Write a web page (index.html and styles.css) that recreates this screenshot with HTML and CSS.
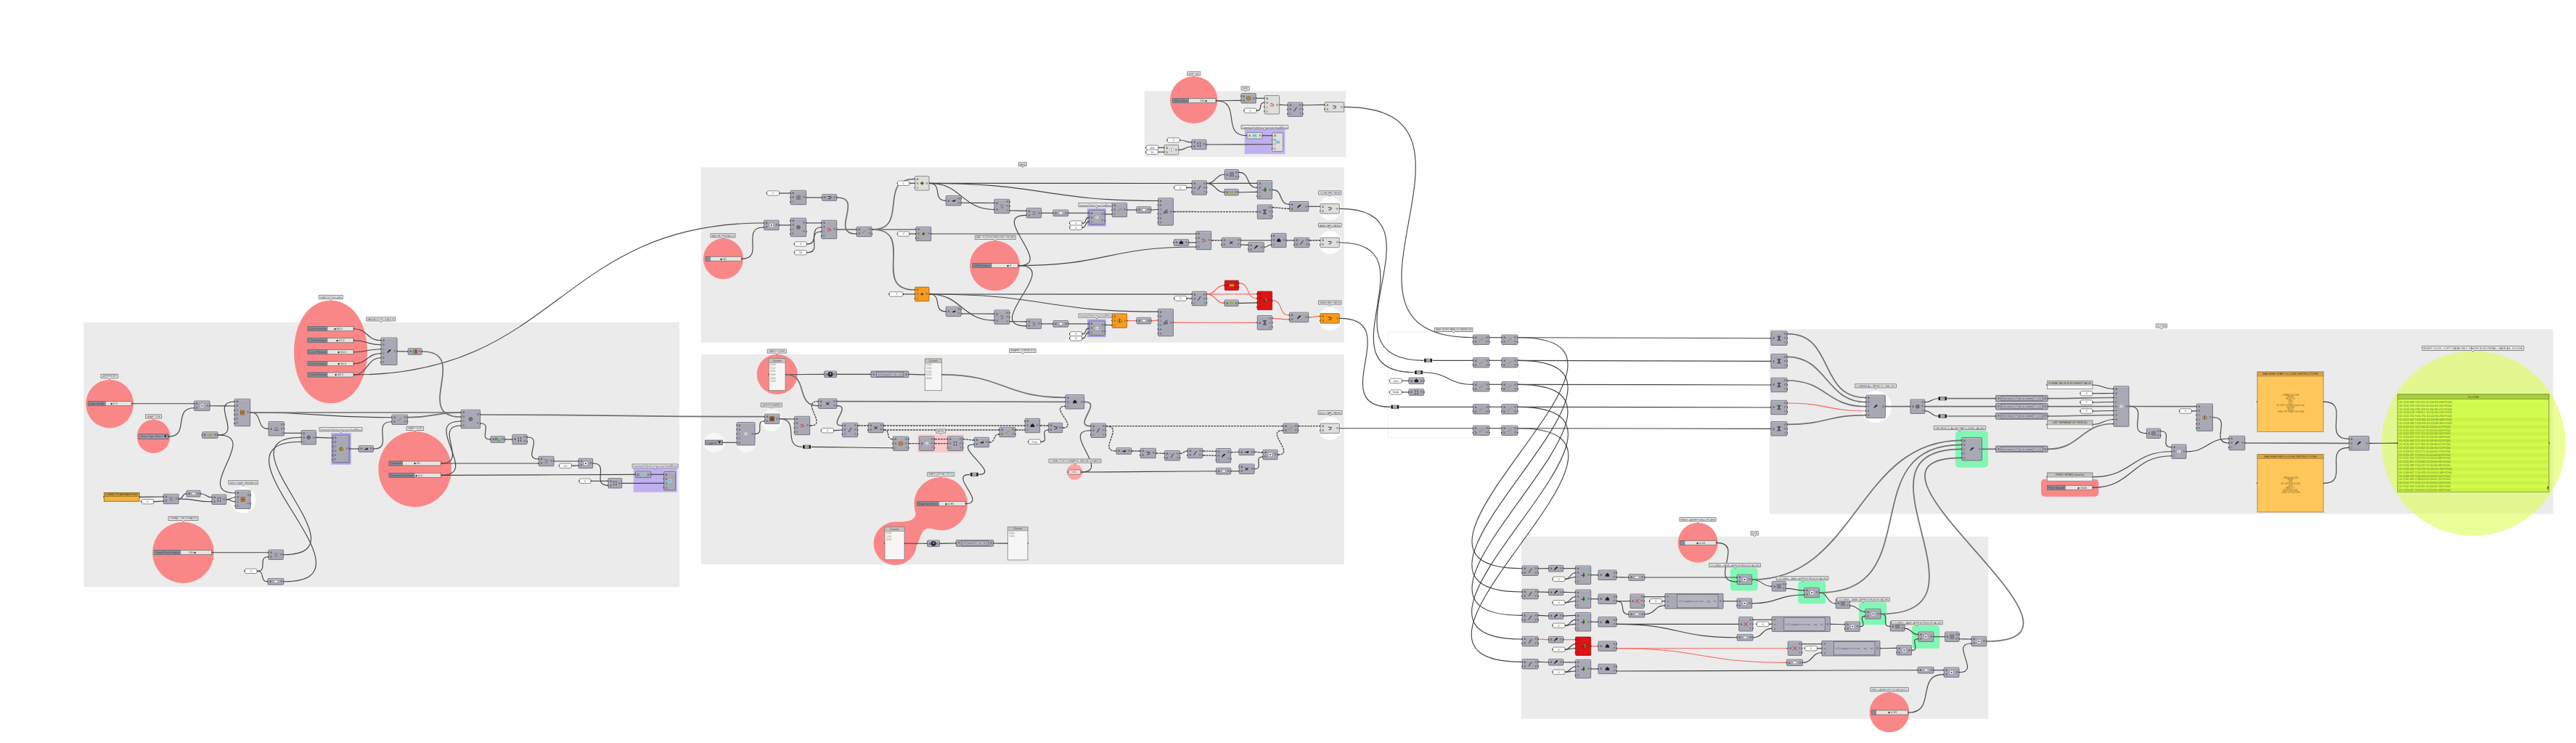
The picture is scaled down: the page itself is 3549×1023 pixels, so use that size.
FILE: index.html
```html
<!DOCTYPE html>
<html lang="en">
<head>
  <meta charset="UTF-8">
  <title>Definition canvas</title>
  <link rel="stylesheet" href="styles.css">
</head>
<body>
  <svg class="canvas" width="3549" height="1023" viewBox="0 0 3549 1023">
    <g id="groups"></g>
    <g id="wires"></g>
    <g id="nodes"></g>
    <g id="tags"></g>
  </svg>
  <script src="graph.js"></script>
</body>
</html>
```

FILE: styles.css
```css
body {
  margin: 0;
  background: #fff;
  overflow: hidden;
}
.canvas {
  display: block;
  font-family: "Liberation Sans", Arial, sans-serif;
}

/* groups */
.group { fill: #ebebeb; }
.outline { fill: none; stroke: #f0f0f0; stroke-width: 1; }
.red { fill: #fa8787; }
.pink { fill: #fbc8ca; }
.pale { fill: #ffa3a6; }
.purple { fill: #c0b0f0; }
.violet { fill: #aaa2f0; }
.green { fill: #80f7b4; }
.halo { fill: #fff; fill-opacity: .85; }
.soft { fill: #f7f7f5; }
.lime { fill: #dcff50; fill-opacity: .58; }

/* wires */
.wire { fill: none; stroke: #444; stroke-width: 1.15; }
.thick { stroke-width: 1.7; stroke: #707070; }
.dash { stroke-width: 1.3; stroke-dasharray: 3 1; }
.error { stroke: #f4665a; }

/* components */
.node { fill: #a9a9b5; stroke: #5f5f69; stroke-width: .8; }
.node.light { fill: #dededb; stroke: #747472; }
.node.warn { fill: #fb9a1c; stroke: #8c5a18; }
.node.fail { fill: #e11316; stroke: #8d1012; }
.edge { fill: #c8c8d1; fill-opacity: .7; }
.port { fill: #262626; }
.letter { font-size: 3.8px; fill: #44444f; text-anchor: middle; }
.letter.fail { fill: #7a0d0d; }
.letter.warn { fill: #7d4d0c; }
.value { fill: #fff; stroke: #606060; stroke-width: .7; }
.value.pinkish { fill: #ffd9d9; }
.relay { fill: #1d1d1d; }
.relay-mid { fill: #a5a5a5; }
.formula { fill: #b5b5c2; stroke: #62626e; stroke-width: .7; }
.formula-text { font-size: 4px; fill: #555566; font-family: "Liberation Mono", monospace; }

/* sliders and panels */
.slider { fill: #e6e5e1; stroke: #666; stroke-width: .7; }
.slider-name { fill: #8b8e98; stroke: #565a64; stroke-width: .5; }
.slider-text { font-size: 3.4px; fill: #3e414a; }
.knob-text { font-size: 4px; fill: #333; }
.list { fill: #a0a2ac; stroke: #4c4c56; stroke-width: .7; }
.panel { fill: #f6f6f6; stroke: #808080; stroke-width: .8; }
.panel-head { fill: #c4c4c0; stroke: #808080; stroke-width: .6; }
.panel-text { font-size: 3.2px; fill: #555; }
.panel.orange { fill: #ffc75a; stroke: #9b7c40; }
.panel-head.orange { fill: #d9a345; stroke: #9b7c40; }
.panel.amber { fill: #f0b540; stroke: #85641f; }
.panel-head.amber { fill: #d19a35; stroke: #85641f; }
.panel.acid { fill: #d2fb50; stroke: #6a8226; }
.panel-head.acid { fill: #a9d03d; stroke: #6a8226; }
.stripe { fill: #caf243; }
.orange-text { font-size: 3.2px; fill: #80601f; text-anchor: middle; }
.acid-text { font-size: 3.6px; fill: #5c7818; }
.head-text { font-size: 3.8px; fill: #3e3c26; text-anchor: middle; }
.grip { fill: #5b6f24; }

/* tags */
.tag { fill: #f0f0f0; stroke: #666a6a; stroke-width: .8; }
.tag-text { font-size: 4.4px; fill: #424545; }

/* icons */
.i-dark { fill: #222228; }
.i-line { fill: none; stroke: #2e2e36; stroke-width: .9; }
.i-gray { fill: none; stroke: #5f5f6a; stroke-width: .7; }
.i-white { fill: #fff; stroke: #777; stroke-width: .3; }
.i-orange { fill: #e2902c; stroke: #7c480c; stroke-width: .6; }
.i-yellow { fill: #cfa83a; stroke: #5f4d18; stroke-width: .5; }
.i-olive { fill: #a4ac2d; }
.i-green { fill: #49b83a; }
.i-red { fill: none; stroke: #c4303c; stroke-width: 1; }
.i-redfill { fill: #d32e2e; }
.i-cyan { fill: #8adbe4; }
```

FILE: graph.js
```js
const NS = 'http://www.w3.org/2000/svg';
const layer = id => document.getElementById(id);
const groups = layer('groups'), wireLayer = layer('wires'), nodes = layer('nodes'), tags = layer('tags');
const ports = {};
const STEP = 6;

function el(parent, name, cls, attrs, text) {
  const e = document.createElementNS(NS, name);
  if (cls) e.setAttribute('class', cls);
  for (const k in attrs) e.setAttribute(k, attrs[k]);
  if (text !== undefined) e.textContent = text;
  parent.appendChild(e);
  return e;
}
function rect(parent, cls, x, y, width, height, rx = 0) {
  return el(parent, 'rect', cls, { x, y, width, height, rx });
}
function fitText(parent, cls, x, y, width, text) {
  return el(parent, 'text', cls, { x, y, textLength: width, lengthAdjust: 'spacingAndGlyphs' }, text);
}
function ellipse(cls, x, y, w, h) {
  el(groups, 'ellipse', cls, { cx: x + w / 2, cy: y + h / 2, rx: w / 2, ry: h / 2 });
}
function box(cls, x, y, w, h, r) { rect(groups, cls, x, y, w, h, r); }
function dot(x, y) { el(nodes, 'circle', 'port', { cx: x, cy: y, r: 1.15 }); }

// port rows are spread over the height of the component
function rows(cy, count, max) {
  const gap = STEP * max / count;
  return Array.from({ length: count }, (_, i) => cy + (i - (count - 1) / 2) * gap);
}

const icons = {
  dot: [['rect', 'i-white', { x: -2.3, y: -2.3, width: 4.6, height: 4.6 }], ['circle', 'i-dark', { r: 1 }]],
  box: [['rect', 'i-orange', { x: -2.6, y: -3, width: 5.2, height: 6 }], ['path', 'i-line', { d: 'M-1-1.5V1.5M1-1.5V1.5' }]],
  grid: [['rect', 'i-orange', { x: -3, y: -3, width: 6, height: 6 }], ['path', 'i-line', { d: 'M-1-3V3M1-3V3M-3-1H3M-3 1H3' }]],
  hex: [['path', 'i-orange', { d: 'M0-3L2.8-1.4V1.6L0 3L-2.8 1.6V-1.4Z' }], ['circle', 'i-yellow', { r: 1.2 }]],
  yellow: [['path', 'i-yellow', { d: 'M-2.5-1L0-2.6L2.8-1V2.4H-2Z' }], ['path', 'i-line', { d: 'M0-2V2' }]],
  olive: [['path', 'i-olive', { d: 'M-3.2 0L0-2.6L3.2 0L0 2.6Z' }], ['path', 'i-line', { d: 'M-2 0H2M0-2V2' }]],
  plus: [['path', 'i-green', { d: 'M0-3H2.4V2H0Z' }], ['path', 'i-line', { d: 'M-3 .5H2M.5-3V3' }]],
  leaf: [['rect', 'i-olive', { x: -3, y: -1.5, width: 6, height: 3 }]],
  slash: [['path', 'i-gray', { d: 'M-2.5 2L2.5-2' }], ['path', 'i-olive', { d: 'M-2.2 2.2L-1.6 0L2.4-2.6L1.6 0Z', opacity: .6 }]],
  line: [['path', 'i-line', { d: 'M-2.4 2.4Q0 2 0 0T2.4-2.4' }]],
  merge: [['path', 'i-dark', { d: 'M-2.6 2.4L-1.8 0L1-2.6L2.8-1.8L1 .2L-.6 .6L-1 2Z' }]],
  tree: [['circle', 'i-dark', { r: 1.1 }], ['path', 'i-line', { d: 'M-2.2-2L0 0L2.6-1.6M0 0L2 2.4M0 0L-2.4 2' }]],
  blob: [['path', 'i-dark', { d: 'M0-3L2.4-.8L2.8 2H-2.8L-2.4-.8Z' }]],
  brush: [['path', 'i-dark', { d: 'M-3 0H-1L2.8-1.6L2.4 1.2H-1Z' }]],
  ring: [['circle', 'i-line', { r: 2.2 }], ['circle', 'i-dark', { r: .8 }]],
  fan: [['path', 'i-line', { d: 'M-3 2.5Q-2-2 2.5-2.8M-1.4 2.6Q-.6 0 2.6-.6M.4 2.6Q.6 1.5 2.6 1.2' }]],
  fork: [['path', 'i-gray', { d: 'M-2.4-2.4Q0-2 0 0T2.6 2.4M0 0L2.4-2M-2 2.2H0' }]],
  poly: [['path', 'i-gray', { d: 'M-2.6 2.2L0-2.4L2.6 2.2ZM-2.6 2.2H2.6' }]],
  knot: [['path', 'i-line', { d: 'M-2.4-2.6H2.4M-2.4 2.6H2.4M-1.6-2.6L1.6 2.6M1.6-2.6L-1.6 2.6' }]],
  four: [['path', 'i-gray', { d: 'M-2.4-2.6H-.4V-.6H-2.4ZM.6-2.6H2.6V-.6H.6ZM-2.4 .6H-.4V2.6H-2.4ZM.6 .6H2.6V2.6H.6Z' }]],
  bars: [['path', 'i-line', { d: 'M-1.6-3V-.6M1.6-3V-.6M-1.6 .6V3M1.6 .6V3' }]],
  red: [['path', 'i-red', { d: 'M-2.6-.6Q-1.4-3 .4-1.4T2.6 0L1 2.4M-2.4 2.4Q-1 .4 .4 1' }]],
  white: [['rect', 'i-white', { x: -2, y: -1.4, width: 4.4, height: 2.6 }]],
  eq: [['rect', 'i-white', { x: -2.2, y: -2.2, width: 4.4, height: 4.4 }], ['path', 'i-gray', { d: 'M-1-.6H1M-1 .8H1' }]],
  cross: [['path', 'i-red', { d: 'M-2.8-2.8L2.8 2.8M2.8-2.8L-2.8 2.8' }]],
  cyan: [['rect', 'i-cyan', { x: -3.2, y: -2.2, width: 6.4, height: 4.4 }], ['path', 'i-gray', { d: 'M-2 1L0-1L2 1' }]],
  teal: [['path', 'i-green', { d: 'M-2-2.6H0V0H3V2.6H-.6V.6H-2Z' }], ['path', 'i-line', { d: 'M-2.6-2.6V1' }]],
  flip: [['rect', 'i-green', { x: -3, y: -3, width: 3, height: 6 }], ['rect', 'i-redfill', { x: 0, y: -3, width: 3, height: 6 }]],
  hop: [['path', 'i-line', { d: 'M-2.4-1.6L2.2-1.2L1.4 1.4L-1.6 2' }]],
  ball: [['circle', 'i-dark', { r: 3.4 }], ['path', 'i-white', { d: 'M-.8-1.6H1V0H0V1.4' }]]
};
function icon(name, x, y) {
  const g = el(nodes, 'g', '', { transform: `translate(${x} ${y})` });
  for (const [shape, cls, attrs] of icons[name]) el(g, shape, cls, attrs);
}

function node(id, x, cy, w, nin, nout, ic, state = '', size) {
  const max = size || Math.max(nin, nout);
  const h = max === 1 ? 8.6 : max * STEP + 1.4;
  const ins = nin ? rows(cy, nin, max) : [], outs = nout ? rows(cy, nout, max) : [];
  ins.forEach(y => dot(x, y));
  outs.forEach(y => dot(x + w, y));
  rect(nodes, 'node ' + state, x, cy - h / 2, w, h, .8);
  if (!state) rect(nodes, 'edge', x + .5, cy - h / 2 + .4, w - 1, 1.1);
  ins.forEach((y, i) => el(nodes, 'text', 'letter ' + state, { x: x + 3.4, y: y + 1.4 }, 'ABCDEFGHI'[i]));
  outs.forEach((y, i) => el(nodes, 'text', 'letter ' + state, { x: x + w - 3, y: y + 1.4 }, 'RPTV'[i]));
  if (ic) icon(ic, x + w / 2, cy);
  ports[id] = { x, r: x + w, ins, outs };
}
function value(id, x, cy, w = 16.7, text = '0', cls = '') {
  dot(x, cy);
  dot(x + w, cy);
  rect(nodes, 'value ' + cls, x, cy - 3.2, w, 6.4, 2);
  el(nodes, 'text', 'letter', { x: x + w / 2, y: cy + 1.3 }, text);
  ports[id] = { x, r: x + w, ins: [cy], outs: [cy] };
}
function slider(id, x, cy, w, split, knob, num, name) {
  dot(x + w, cy);
  rect(nodes, 'slider', x, cy - 3, w, 6);
  rect(nodes, 'slider-name', x, cy - 3, split, 6);
  if (split > 10) fitText(nodes, 'slider-text', x + 1.5, cy + 1.2, split - 3, name);
  el(nodes, 'text', 'knob-text', { x: knob, y: cy + 1.4 }, num.includes('◆') ? num : '◆ ' + num);
  ports[id] = { x, r: x + w, ins: [cy], outs: [cy] };
}
function list(id, x, cy, w, name) {
  dot(x + w, cy);
  rect(nodes, 'list', x, cy - 3.2, w, 6.4);
  fitText(nodes, 'slider-text', x + 2, cy + 1.2, w - 10, name);
  el(nodes, 'path', 'i-dark', { d: `M${x + w - 6} ${cy - 1.8}h4l-2 3.6z` });
  ports[id] = { x, r: x + w, ins: [cy], outs: [cy] };
}
function relay(id, x, cy, w = 11.2) {
  rect(nodes, 'relay', x, cy - 2.5, w, 5, 1);
  rect(nodes, 'relay-mid', x + 2.6, cy - 2.3, w - 5.2, 4.6);
  ports[id] = { x, r: x + w, ins: [cy], outs: [cy] };
}
function formula(id, x, cy, w, nin, text) {
  const h = nin === 1 ? 8.6 : nin * STEP + 2.6, pad = nin === 1 ? 7.5 : 16.5;
  const ins = rows(cy, nin, nin);
  ins.forEach(y => dot(x, y));
  dot(x + w, cy);
  rect(nodes, 'node', x, cy - h / 2, w, h, .8);
  rect(nodes, 'formula', x + pad, cy - h / 2 + 1.2, w - pad - 7, h - 2.4);
  fitText(nodes, 'formula-text', x + pad + 2, cy + 1.4, w - pad - 11, text);
  ins.forEach((y, i) => el(nodes, 'text', 'letter', { x: x + 4, y: y + 1.3 }, 'Fxy'[i]));
  el(nodes, 'text', 'letter', { x: x + w - 3.4, y: cy + 1.3 }, 'R');
  ports[id] = { x, r: x + w, ins, outs: [cy] };
}
function panel(id, x, y, w, h, head, title, cls = '', port = y + h / 2) {
  dot(x, port);
  dot(x + w, port);
  rect(nodes, 'panel ' + cls, x, y, w, h);
  rect(nodes, 'panel-head ' + cls, x, y, w, head);
  const max = w - 4;
  const t = el(nodes, 'text', 'head-text', { x: x + w / 2, y: y + head / 2 + 1.3 }, title);
  if (t.getComputedTextLength() > max) {
    t.setAttribute('textLength', max);
    t.setAttribute('lengthAdjust', 'spacingAndGlyphs');
  }
  ports[id] = { x, r: x + w, ins: [port], outs: [port] };
}
function checklist(id, x, y, w, h, count) {
  panel(id, x, y, w, h, 5.6, 'Curves');
  for (let i = 0; i < count; i++) {
    el(nodes, 'text', 'panel-text', { x: x + 2, y: y + 9.2 + i * 4.7 }, i + ' 0.' + i);
  }
}
function tag(x, y, w, text, h = 5.2, tip = x + w / 2) {
  el(tags, 'path', 'tag', { d: `M${x} ${y}h${w}v${h}H${tip + 1.4}l-1.4 2l-1.4-2H${x}z` });
  fitText(tags, 'tag-text', x + 1.5, y + h / 2 + 1.5, w - 3, text);
}
function wires(cls, list) {
  for (const item of list.trim().split(/\s+/)) {
    const [a, b] = item.split('>');
    const [from, o = 0] = a.split('.'), [to, i = 0] = b.split('.');
    const x1 = ports[from].r + .8, y1 = ports[from].outs[o];
    const x2 = ports[to].x - .8, y2 = ports[to].ins[i];
    const k = Math.max(Math.abs(x2 - x1) * .5, Math.abs(y2 - y1) * .74);
    el(wireLayer, 'path', 'wire ' + cls, { d: `M${x1} ${y1}C${x1 + k} ${y1} ${x2 - k} ${y2} ${x2} ${y2}` });
  }
}

// --- groups -------------------------------------------------------------
box('group', 115.3, 443.7, 820.7, 364.3);
box('group', 966, 230.3, 885.7, 241.4);
box('group', 966, 488, 885.7, 289);
box('group', 1576.7, 125.3, 277.3, 90.7);
box('group', 2096, 738.7, 643.3, 251);
box('group', 2438, 453.3, 1079.5, 254.2);
box('outline', 1912.3, 457.3, 180.3, 145.3);

// --- base curves --------------------------------------------------------
ellipse('red', 118.3, 522.7, 65.7, 66.7);
ellipse('red', 188.7, 577.7, 45.7, 46.3);
el(groups, 'path', 'red', { d: 'M405 484.5C405 446 424 413.7 455.5 413.7S506 446 506 484.5S487 555.3 455.5 555.3S405 523 405 484.5Z' });
ellipse('red', 210, 718.7, 84.7, 84.3);
ellipse('red', 521.3, 594, 100.7, 104);
ellipse('halo', 318, 670.5, 34, 36);
box('violet', 456.3, 596.3, 27.3, 43.3);
box('purple', 872.7, 645, 60, 32.7);
tag(139, 515.3, 23.5, 'LAYER HEIGHT');
tag(200.5, 570.8, 22, 'SEAM TYPE');
tag(439.3, 406.5, 33, 'PLANE POSITION SLIDERS');
tag(504.7, 436.8, 40, 'MASS ADDITION / SCALE UP');
tag(440, 588.6, 59, 'Download Pufferfish plugin from Food4Rhino', 5.2, 470);
tag(314.7, 661.6, 40.7, 'SERVO PLANE ORIENTATION');
tag(232, 711.3, 41, 'OVERALL CIRCLE RADIUS');
tag(560, 587.3, 23.6, 'SHAPE COUNT');
tag(871, 639, 63, 'Download Pufferfish plugin from Food4Rhino');
slider('s1', 121.3, 555.7, 60, 24, 152, '0.5', 'Layer Height');
list('s2', 191.7, 601, 40, 'Seam Type Select');
[[452.7, 459.5, '46.0'], [468.7, 462.5, '47.0'], [484.7, 465, '50.0'], [500.7, 465, '50.0'], [516, 461, '46.5']]
  .forEach(([y, k, v], i) => slider('p' + i, 424, y, 63, 27, k, v, 'Curve Position'));
slider('s4', 212.7, 760.7, 79, 36, 260, '110 ◆', 'Overall Circle Radius');
slider('q1', 536, 638, 71.3, 18.7, 570, '20', 'Count');
slider('q2', 536, 654.3, 71.3, 35, 572, '0.5', 'Smoothing Strength');
node('a1', 267.7, 558.7, 21.3, 2, 1, 'dot');
node('a2', 323.3, 568, 21.3, 6, 1, 'box');
node('a3', 278.7, 599, 21.3, 1, 1, 'leaf');
node('a4', 370, 590.3, 21.3, 1, 3, 'poly');
node('a5', 415.3, 602.3, 20, 3, 1, 'ring');
node('a6', 458.7, 618, 22.3, 6, 1, 'yellow');
node('a7', 494.3, 618, 20, 1, 1, 'brush');
panel('pan', 143.3, 678.3, 48.7, 12, 5.2, 'CONNECT PLANE BASE POINT', 'amber');
value('v1', 195, 690.7);
node('a8', 225.3, 687, 20.7, 2, 1, 'fork');
node('a9', 257, 679.7, 19, 1, 1, 'white');
node('a10', 292, 687.7, 19.7, 2, 1, 'bars');
node('a11', 324.3, 687.7, 20.7, 4, 2, 'box');
node('b1', 370, 763.7, 20.3, 2, 1, 'fork');
value('v2', 337.3, 786.3);
node('b2', 369, 800.7, 21.7, 1, 1, 'white');
node('c1', 525, 483.7, 22, 6, 1, 'merge');
node('c2', 562.3, 484, 18.7, 1, 1, 'flip');
node('c3', 540, 577.7, 21.3, 2, 2, 'slash');
node('c4', 635.3, 577, 26.3, 4, 2, 'ring');
node('c5', 676, 605, 19.3, 1, 1, 'teal');
node('c6', 706, 605, 20, 1, 2, 'bars');
node('c7', 742.3, 635, 20.7, 2, 1, 'fork');
value('v3', 770.7, 641.3, 16.7, '0.5');
node('c8', 797.3, 638, 19.3, 2, 1, 'dot');
value('v4', 798.3, 662.3, 15.7);
node('c9', 838, 665.3, 18.7, 2, 1, 'bars');
node('c10', 875.7, 653.3, 21, 1, 1, 'cyan');
node('c11', 914.7, 662.3, 16, 4, 0, 'cyan');

// --- base infill --------------------------------------------------------
ellipse('red', 969, 328.3, 55, 56);
ellipse('red', 1336, 331.3, 69, 69);
tag(979, 321.7, 34, 'BASE PATTERN RADIUS');
tag(1343.3, 324.3, 56, 'BASE - FLOOR THICKNESS INFILL LINE (MM)');
tag(1403.3, 223.5, 11, 'BASE');
slider('r1', 972.3, 356.3, 49, 6, 992, '10', '');
slider('r2', 1340, 365.7, 62.3, 26, 1387, '2', 'Infill Thickness');
value('v5', 1056.7, 266, 17);
node('d1', 1089.3, 272, 21.3, 3, 1, 'four');
node('d2', 1132.7, 272, 20, 1, 1, 'hop');
node('d3', 1052.7, 310, 20.3, 2, 1, 'dot');
node('d4', 1089.3, 313, 21.3, 4, 2, 'ring');
node('d5', 1132, 316, 20.7, 4, 1, 'red');
value('v6', 1094.7, 336);
value('v7', 1094.7, 347.7, 16.7, '10');
node('d6', 1180.3, 319, 20.7, 2, 2, 'slash');
node('d7', 1260.7, 252.3, 19.3, 3, 1, 'olive', 'light');
value('v8', 1236.7, 252.3, 16.3, '1');
node('d10', 1262, 322, 20.7, 3, 1, 'olive');
value('v9', 1236.7, 322, 16.3, '0');
node('d11', 1260.7, 405, 19.3, 3, 1, 'olive', 'warn');
value('v10', 1225.3, 405, 18.7, '-1');
node('m0', 1617.3, 334, 20.3, 1, 1, 'blob');
node('m1', 1648, 331, 20.7, 4, 1, 'red');
node('m2', 1683.3, 334, 26, 2, 2, 'tree');
node('m3', 1720, 340.3, 21.3, 2, 1, 'merge');
node('m4', 1751.7, 331, 20.3, 3, 1, 'blob');
node('m5', 1783.3, 334, 20.3, 2, 2, 'line');
ellipse('halo', 1816.5, 318, 32, 32);
node('m6', 1819, 334, 26.3, 2, 1, 'hop', 'light');
tag(1816.5, 307.4, 31.5, 'BASE PART PATHS');

// the upper and the lower infill branch have the same layout
for (const [n, dy, bad] of [['u', 0, false], ['w', 152.6, true]]) {
  node(n + 1, 1303.3, 276.3 + dy, 20.7, 1, 2, 'brush');
  node(n + 2, 1370, 284 + dy, 20.7, 2, 3, 'fork');
  node(n + 3, 1642.3, 258.5 + dy, 20, 3, 3, 'line');
  value(n + 'v', 1618, 258.3 + dy);
  node(n + 4, 1687.3, 240.3 + dy, 19, 1, 2, bad ? 'leaf' : 'four', bad ? 'fail' : '');
  node(n + 5, 1687, 264.7 + dy, 19, 1, 1, 'leaf');
  node(n + 6, 1732.3, 261.3 + dy, 20.3, 4, 1, 'plus', bad ? 'fail' : '');
  node(n + 7, 1732.3, 291.7 + dy, 20.3, 1, 3, 'knot');
  node(n + 8, 1595.7, 291.5 + dy, 20.7, 6, 1, 'fan');
  node(n + 9, 1414.3, 293.3 + dy, 20.3, 2, 1, 'fork');
  node(n + 10, 1451, 293.3 + dy, 20.7, 1, 1, 'white');
  box('violet', 1498, 287 + dy, 25.7, 24.5);
  node(n + 11, 1500.7, 299.3 + dy, 21.3, 3, 2, 'eq');
  value(n + 'a', 1474, 307.3 + dy);
  value(n + 'b', 1474, 313.3 + dy);
  node(n + 12, 1532.3, 289 + dy, 20.3, 3, 1, bad ? 'yellow' : 'slash', bad ? 'warn' : '');
  node(n + 13, 1566, 289 + dy, 19.7, 1, 1, 'white');
  node(n + 14, 1776.7, 284.3 + dy, 26, 2, 1, 'merge');
  ellipse('halo', 1816.5, 270.7 + dy, 32, 32);
  node(n + 15, 1819, 287.3 + dy - (bad ? 1.5 : 0), 26.3, 2, 1, 'hop', bad ? 'warn' : 'light');
  tag(1486, 279.5 + dy, 46, 'Download Pufferfish plugin Food4Rhino', 5.2, 1511);
  tag(1816.5, 262.8 + dy - (bad ? 1.5 : 0), 31.5, bad ? 'INNER PART PATHS' : 'OUTER PART PATHS');
}

// --- shape body ---------------------------------------------------------
ellipse('red', 1042.7, 487.7, 56, 55.3);
ellipse('soft', 1049, 564, 28, 30);
ellipse('soft', 969, 596, 30, 27);
ellipse('soft', 1015, 595, 26, 28);
box('pink', 1264, 598.3, 64, 24.7);
el(groups, 'path', 'red', { d: 'M1296.7 657.3A36 36.5 0 1 1 1286 728.6C1268 722 1268 745 1262.9 751A29.7 29.7 0 1 1 1233 718.6C1245 718.6 1262 719 1261.5 706A36 36.5 0 0 1 1296.7 657.3Z' });
ellipse('pale', 1469.7, 639, 21.7, 21.7);
tag(1057.3, 481, 26, 'SHAPE SLIDERS');
tag(1048.3, 555, 29, 'LAYER NUMBERS');
tag(1289.7, 591, 13, 'REPEL');
tag(1277.7, 650.3, 37, 'SHAPE SIZE FACTOR (%)');
tag(1390.7, 480.3, 36.5, 'SHAPE CONTROLS');
tag(1445, 632, 72, 'CONNECTION TOLERANCE / BRIDGE DISTANCE');
tag(1816, 565.4, 33, 'BODY PART PATHS');
checklist('C1', 1059.3, 493.7, 22.7, 44, 6);
node('C2', 1135.7, 515.3, 16.7, 1, 1, 'ball');
formula('C3', 1200, 515.3, 51.7, 1, 'if(x=null, 0, x)');
checklist('C4', 1274.3, 494, 23, 43.7, 5);
node('D1', 1127.7, 555.7, 25, 2, 2, 'tree');
node('g1', 1053.7, 576.7, 20, 2, 1, 'grid');
node('g2', 1015.3, 597.3, 24.7, 5, 1, 'eq');
list('g3', 971.3, 609.3, 24, 'Layers');
node('g4', 1094.7, 586, 21, 4, 1, 'red');
value('v15', 1131.7, 592.7);
node('g5', 1160.7, 592, 20.7, 3, 3, 'line');
node('g6', 1196.3, 589, 20.7, 2, 2, 'tree');
relay('h1', 1106, 615.3);
node('g7', 1230.3, 610.7, 21.3, 3, 3, 'hex');
node('g8', 1266.7, 610.7, 20.3, 1, 3, 'eq');
node('g9', 1305.7, 610.7, 20.7, 3, 3, 'bars');
node('g10', 1342.3, 609, 20.3, 2, 1, 'brush');
node('g11', 1377, 595, 21.7, 2, 2, 'slash');
relay('h2', 1336.7, 653.3);
slider('t1', 1263.3, 693.3, 66.7, 30, 1302, '0.85', 'Shape Size Factor');
checklist('C5', 1219, 725.7, 27, 45, 3);
node('C6', 1277.7, 748.3, 16.7, 1, 1, 'ball');
formula('C7', 1317.3, 748, 51.3, 1, 'if(x=null, 0, x)');
checklist('C8', 1388.3, 725.3, 27.7, 45.7, 2);
node('k1', 1468, 553.3, 25.7, 3, 1, 'blob');
node('k2', 1412.3, 586, 20.3, 3, 1, 'blob');
node('k3', 1444.7, 589, 19, 2, 1, 'hop');
value('v16', 1417, 608.3, 16.7, 'True');
node('k4', 1503, 592.7, 20.3, 3, 3, 'line');
value('v17', 1471.7, 650, 17.3, '0.1', 'pinkish');
node('k5', 1538, 621, 20.7, 1, 1, 'brush');
node('k6', 1571.3, 624, 21, 2, 1, 'hop');
node('k7', 1604.7, 627.3, 20.7, 2, 2, 'line');
node('k8', 1636.3, 624, 20.3, 2, 2, 'line');
node('k9', 1675.7, 627.3, 20, 3, 2, 'merge');
node('k10', 1707, 622.3, 21, 1, 1, 'brush');
node('k11', 1740, 626, 20, 2, 1, 'dot');
node('k12', 1675.7, 648.7, 20, 1, 1, 'white');
node('k13', 1707.3, 645.7, 20.7, 2, 1, 'tree');
node('k14', 1768, 589.7, 20.3, 2, 2, 'slash');
ellipse('halo', 1816.5, 574, 32, 32);
node('k15', 1819, 589.7, 26.3, 2, 1, 'hop', 'light');

// --- skirt --------------------------------------------------------------
ellipse('red', 1612, 105.3, 65.3, 64.7);
box('purple', 1714.7, 178.3, 55.7, 33.7);
tag(1635.7, 98.7, 18, 'SKIRT SIZE');
tag(1710, 119, 11.3, 'SKIRT');
tag(1710, 172.4, 64.7, 'Download Pufferfish plugin from Food4Rhino');
slider('sk', 1615.7, 138.7, 59.3, 22, 1653, '110 ◆', 'Skirt Size');
node('S1', 1710, 135.3, 20.3, 2, 1, 'hex');
value('sv', 1714.3, 152.3);
node('S2', 1742.3, 144.3, 20.3, 4, 1, 'red', 'light');
node('S3', 1774.3, 150.7, 20.3, 3, 3, 'line');
node('S4', 1825.3, 147.3, 26.3, 2, 1, 'hop', 'light');
node('S5', 1718, 186.7, 21, 1, 1, 'cyan', 'light');
node('S6', 1753, 195.7, 14.7, 4, 0, 'cyan', 'light');
node('S7', 1642, 199, 20, 2, 1, 'bars');
value('sa', 1608.3, 193, 17);
node('S8', 1604, 206.3, 19.7, 2, 1, 'eq', 'light');
value('sb', 1579, 203.3, 16.7, '100');
value('sc', 1579, 209.3, 16.7, '50');

// --- seam alignment and travel/extrusion branches -----------------------
tag(1976.3, 451.3, 52.7, 'MAKE LAYERS PARALLEL/SEAM ALIGN');
relay('l1', 1962, 496.3);
relay('l2', 1949, 512.7);
relay('l3', 1916.3, 560.3);
value('lv', 1914.7, 524.3, 16.7, 'skirt');
value('lw', 1914.7, 540, 16.7, 'body');
node('l4', 1941, 524.3, 20.7, 1, 1, 'blob');
node('l5', 1941, 540, 20.7, 1, 1, 'bars');
[467.7, 499.3, 532.3, 563.3, 592.7].forEach((y, i) => {
  node('ma' + i, 2029.7, y, 22, 2, 2, 'slash');
  node('mb' + i, 2069, y, 21.7, 2, 2, 'slash');
});
[465.7, 497.3, 530, 561, 590.3].forEach((y, i) => node('R' + i, 2440, y, 22, 1, 3, 'knot'));
[[785.7, 782.7, 797.3, 791.7], [818, 815.3, 829.7, 824.7], [850.3, 848, 861.3, 856.3], [883, 880.7, 894.3, 889.7], [914.3, 911.7, 925.3, 921]]
  .forEach(([a, b, c, d], i) => {
    node('na' + i, 2097.3, a, 21.7, 2, 2, 'line');
    node('nb' + i, 2133.7, b, 20, 1, 1, 'merge');
    value('nv' + i, 2139.3, c);
    node('nc' + i, 2170.7, d, 21, 4, 1, 'plus', i === 3 ? 'fail' : '');
    node('nd' + i, 2202, d, 25, 1, 2, 'blob');
  });

// --- extrusion ----------------------------------------------------------
ellipse('red', 2311.7, 719.7, 55, 55);
ellipse('red', 2575.7, 953.3, 54.7, 55);
box('green', 2384, 782.3, 37.7, 31, 4);
box('green', 2477.3, 800, 38, 31.3, 4);
box('green', 2561, 829.3, 38.3, 31, 4);
box('green', 2634.3, 861, 38, 32, 4);
tag(2314, 712.6, 50, 'FIRST LAYER E MULTIPLIER');
tag(2412, 731.7, 10.7, 'EXTR');
tag(2354.7, 775.5, 70.7, 'COLUMNS + BASE LAYER EXTRUSION VALUES', 5.2, 2391);
tag(2447.3, 793.6, 71.7, 'COLUMNS + BASE LAYER EXTRUSION VALUES', 5.2, 2484);
tag(2531, 822.8, 72.3, 'COLUMNS + BASE LAYER EXTRUSION VALUES', 5.2, 2567);
tag(2606, 854.6, 70.3, 'COLUMNS + BASE LAYER EXTRUSION VALUES', 5.2, 2641);
tag(2577, 946.6, 52.3, 'FIRST LAYER E MULTIPLIER (BODY)');
slider('es', 2315, 747.3, 49.3, 6, 2337, '0.03', '');
slider('et', 2578.7, 981, 50, 6, 2601, '0.03', '');
node('n5', 2244, 795, 21.7, 1, 1, 'white');
node('G0', 2393.3, 798, 20.3, 2, 1, 'dot');
node('G1', 2486, 816, 20.3, 2, 1, 'dot');
node('G2', 2570, 845.3, 21, 2, 1, 'dot');
node('G3', 2643, 876.7, 20.7, 2, 1, 'dot');
node('G5', 2716.3, 883, 20.3, 2, 1, 'dot');
node('y1', 2441.3, 807.3, 19, 1, 2, 'four');
node('y2', 2529.3, 831, 19.3, 1, 2, 'four');
node('y3', 2604.3, 862.3, 19.7, 1, 2, 'four');
node('y4', 2679.7, 876.7, 19.3, 1, 2, 'four');
[[2246, 827.7, 2273, 2244, 845.7, 2294, 2393.3, 830.7],
 [2395.7, 859.3, 2420.3, 2393.3, 877.7, 2441.3, 2542, 862.7],
 [2463.3, 892.7, 2486.7, 2461.7, 912.3, 2510, 2613.3, 895.3]].forEach(([x, y, vx, px, py, fx, dx, dy], i) => {
  node('x' + i, x, y, 19, 1, 3, 'cross');
  value('xv' + i, vx, y);
  node('xp' + i, px, py, 21.7, 1, 1, 'white');
  formula('xf' + i, fx, y, 80, 3, 'if(Support=True, 3y, 0)');
  node('xd' + i, dx, dy, 20.3, 2, 1, 'dot');
});
node('z1', 2642.3, 922.7, 21.7, 1, 1, 'white');
node('z2', 2678.3, 925.7, 20.7, 2, 1, 'dot');

// --- g-code -------------------------------------------------------------
ellipse('halo', 2563, 538, 43, 44);
box('green', 2694, 593, 45, 50.7, 5);
box('red', 2812, 659.7, 79.3, 24, 5);
ellipse('lime', 3281, 483.3, 253.3, 254.3);
tag(2555.7, 528.7, 56.8, 'COMBINE ALL PATHS TO ONE LIST');
tag(2664.3, 586.4, 71.4, 'THE PRINT E VALUES PARTS SPEED VALUES');
tag(2970.4, 446, 15, 'G-CODE');
tag(3337, 476.5, 140, 'RIGHT CLICK, COPY DATA ONLY, PASTE IN NOTEPAD, SAVE AS .GCODE', 6);
node('M1', 2571, 559.7, 26.4, 5, 1, 'merge');
node('M2', 2632, 559.7, 19.8, 1, 3, 'ring');
relay('h3', 2670.4, 548.7, 11.8);
relay('h4', 2670.4, 573, 11.8);
[548.7, 559.7, 573, 618.3].forEach((y, i) => formula('f' + i, 2749.6, y, 71.5, 1, 'Format("{0:0.000}",x)'));
node('MG', 2703, 618.3, 27.5, 5, 1, 'merge');
panel('P1', 2820.4, 524.3, 62.5, 11.3, 6, 'FORMAT VALUE IN MOVEMENT VALUE');
panel('P2', 2820.4, 579, 62.5, 11, 6, 'LIST SEPARATOR ITEM (E)');
panel('P3', 2820.4, 651, 62.5, 11.3, 6, 'PRINT SPEED (mm/m)');
value('pv1', 2866.4, 541.7, 16.5, 'X');
value('pv2', 2866.4, 554, 16.5, 'Y');
value('pv3', 2866.4, 566, 16.5, 'Z');
slider('ps', 2820.4, 671.3, 62.5, 25, 2862, '1500', 'Print Speed');
node('RM', 2912, 559.5, 21, 9, 1, 'eq');
node('y5', 2957.5, 596.7, 19, 1, 2, 'four');
value('tv', 3002.9, 566, 16.4);
node('T1', 3026.4, 574.7, 22, 6, 1, 'yellow');
node('T2', 2992, 621.7, 20, 3, 1, 'eq');
node('T3', 3071, 610, 21.8, 3, 1, 'merge');
node('T4', 3236.4, 610.3, 27.5, 3, 1, 'merge');
panel('O1', 3110, 512, 91, 82.3, 6, 'MACHINE START G-CODE INSTRUCTIONS', 'orange');
panel('O2', 3110, 625.7, 91, 79.3, 6, 'MACHINE END G-CODE INSTRUCTIONS', 'orange');
panel('L1', 3303.2, 543, 208.6, 134.3, 6.6, 'G-CODE', 'acid');
['; START GCODE', 'M104', 'M109 T0', 'G90', 'G21', 'G1 Z15.0 F9000 (move up)', 'G92 E0', 'M107', '; END OF START GCODE']
  .forEach((t, i) => el(nodes, 'text', 'orange-text', { x: 3155.5, y: 544.5 + i * 2.93 }, t));
['; END GCODE', 'M104', 'G91', 'G1 Z10 F1500 (lift)', 'G28', 'M84 X Y', 'M140 S0 (off)', '; END OF GCODE']
  .forEach((t, i) => el(nodes, 'text', 'orange-text', { x: 3155.5, y: 658.5 + i * 2.93 }, t));
for (let i = 0; i < 26; i++) {
  const y = 553.7 + i * 4.84;
  if (i % 2 && i > 4) rect(nodes, 'stripe', 3304, y - 2.4, 207, 4.84);
  const n = (v, d) => (v + i * d).toFixed(3);
  fitText(nodes, 'acid-text', 3305, y + 1.2, i < 7 || i > 18 && i < 21 ? 73 : 71,
    `G1 X${n(110.482, 1.317)} Y${n(92.315, 2.104)} Z0.200 E${n(0.048, .052)} F1500`);
}
rect(nodes, 'grip', 3509.3, 669.5, 1.8, 4);

// --- connections --------------------------------------------------------
wires('', `s1>a1.0 s2>a1.1 a1>a2.1 a3>a2.0 a3>a11.0 a2>a4 a2>c3.0 a4.2>a5.0 b1>a5.1 b2>a5.2
  a5>a6.0 a6>a7 a7>c3.1 pan>a8.0 v1>a8.1 a8>a9 a8>a10.1 a9>a10.0 a10>a11.1 a10>a11.2
  s4>b1.0 v2>b1.1 v2>b2 p0>c1.0 p1>c1.1 p2>c1.2 p3>c1.3 p4>c1.4 p4>d3.0 q1>c4.3 q2>c4.2 q1>c7.1 q2>c10
  c1>c2 c4.1>c5 c5>c6 c6.0>c7.0 c7>c8.0 v3>c8.1 v4>c9.0 c8>c9.1 c9>c11.2 c10>c11.0`);
wires('thick', 'a2>c4.0 c2>c4.1 c3.0>c4.0 c4.0>g1.0');
wires('', `r1>d3.1 d3>d4.1 v5>d1.0 d1>d2 d4.0>d5.0 v6>d5.1 v7>d5.2 v8>d7.1 v9>d10.1 v10>d11.1
  r2>m1.3 d10>m1.0 m0>m1.2 m2.1>m3.0 m3>m4.2 m4>m5.0`);
wires('thick', 'd2>d6.1 d5>d6.0 d6.0>d7.0 d6.0>d10.0 d6.0>d11.0 m2.0>m4.1');
wires('dash', 'm1>m2.0 m5.0>m6.0');
for (const [n, src] of [['u', 'd7'], ['w', 'd11']]) {
  const bad = n === 'w' ? 'error' : '';
  wires('', `${src}>${n}1 ${src}>${n}2.1 ${n}1.1>${n}2.0 ${src}>${n}3.0 ${src}>${n}8.0 ${n}v>${n}3.1 ${n}2.2>${n}9.0
    r2>${n}9.1 ${n}9>${n}10 ${n}10>${n}11.0 ${n}a>${n}11.1 ${n}b>${n}11.2 ${n}11.0>${n}12.2 ${n}5>${n}6.2`);
  wires(bad, `${n}3.0>${n}4 ${n}3.0>${n}6.0 ${n}3.0>${n}5 ${n}4.0>${n}6.1 ${n}6>${n}14.0 ${n}14>${n}15.0
    ${n}12>${n}13 ${n}13>${n}8.2`);
  wires(bad || 'dash', `${n}8>${n}7 ${n}7.0>${n}14.1`);
}
wires('', `g1>g4.0 g2>g1.1 g3>g2.4 g1>h1 h1>g7.2 C1>C2 C2>C3 C3>C4 C5>C6 C6>C7 C7>C8 v15>g5.1
  h2>g10.1 t1>h2 v16>k3.1 v17>k4.1 v17>k12 k12>k13.1 k13>k11.1`);
wires('thick', 'C1>D1.1 C4>k1.0 D1.0>k1.1 D1.1>g5.0 k1>k4.0');
wires('dash', `g4>D1.0 g5.0>g6.0 g6.0>k2.1 g6.1>g11.0 g6.1>g7.0 g7.1>g8 g8.0>g9.0 g8.1>g9.1 g9.0>g10.0 g10>g11.1
  g11.0>k2.2 k2>k3.0 k3>k1.2 k4.0>k14.0 k4.0>k5 k5>k6.0 k6>k7.0 k7.0>k8.0 k8.0>k9.0 k8.1>k9.1 k9.0>k10
  k10>k11.0 k11>k14.1 k14.0>k15.0`);
wires('', `sk>S1.1 sk>S5 S1>S2.0 sv>S2.1 S2>S3.0 S3.0>S4.0 S5>S6.0 S7>S6.2 sa>S7.0 S8>S7.1 sb>S8.0 sc>S8.1
  S4>ma0.0 u15>l1 m6>l2 w15>l3 k15>ma4.0 l1>ma1.0 l2>ma2.0 l3>ma3.0 lv>l4 lw>l5`);
for (let i = 0; i < 5; i++) {
  const bad = i === 3 ? 'error' : '';
  wires('', `ma${i}.0>mb${i}.0 mb${i}.0>R${i} mb${i}.0>na${i}.0 nv${i}>nc${i}.1 nv${i}>nc${i}.2`);
  wires(bad, `na${i}.0>nb${i} nb${i}>nc${i}.0 nc${i}>nd${i}`);
  wires(bad || 'thick', `R${i}.0>M1.${i}`);
}
for (let i = 0; i < 3; i++) {
  wires(i === 2 ? 'error' : '', `nd${i + 1}.1>x${i} nd${i + 1}.1>xp${i}`);
  wires('', `x${i}.0>xf${i}.0 xv${i}>xf${i}.1 xp${i}>xf${i}.2 xf${i}>xd${i}.0 xd${i}>G${i + 1}.1`);
}
wires('', 'nd0.1>n5 n5>G0.0 es>G0.1 G0>y1 y1.1>G1.0 G1>y2 y2.1>G2.0 G2>y3 y3.1>G3.0 G3>y4 y4.1>G5.0 nd4.1>z1 z1>z2.0 et>z2.1 z2>G5.1');
wires('thick', 'G0>MG.0 G1>MG.1 G2>MG.2 G5>MG.4 M1>M2 MG>f3 M2.1>f1 h3>f0 h4>f2 f0>RM.2 f1>RM.4 f2>RM.6 f3>RM.8 RM>T1.0 T3>T4.1');
wires('', 'M2.0>h3 M2.2>h4 P1>RM.0 pv1>RM.1 pv2>RM.3 pv3>RM.5 P2>RM.7 RM>y5 y5.0>T2.0 P3>T2.1 ps>T2.2 tv>T1.1 T1>T3.1 T2>T3.0 O1>T4.0 O2>T4.2 T4>L1');
```
